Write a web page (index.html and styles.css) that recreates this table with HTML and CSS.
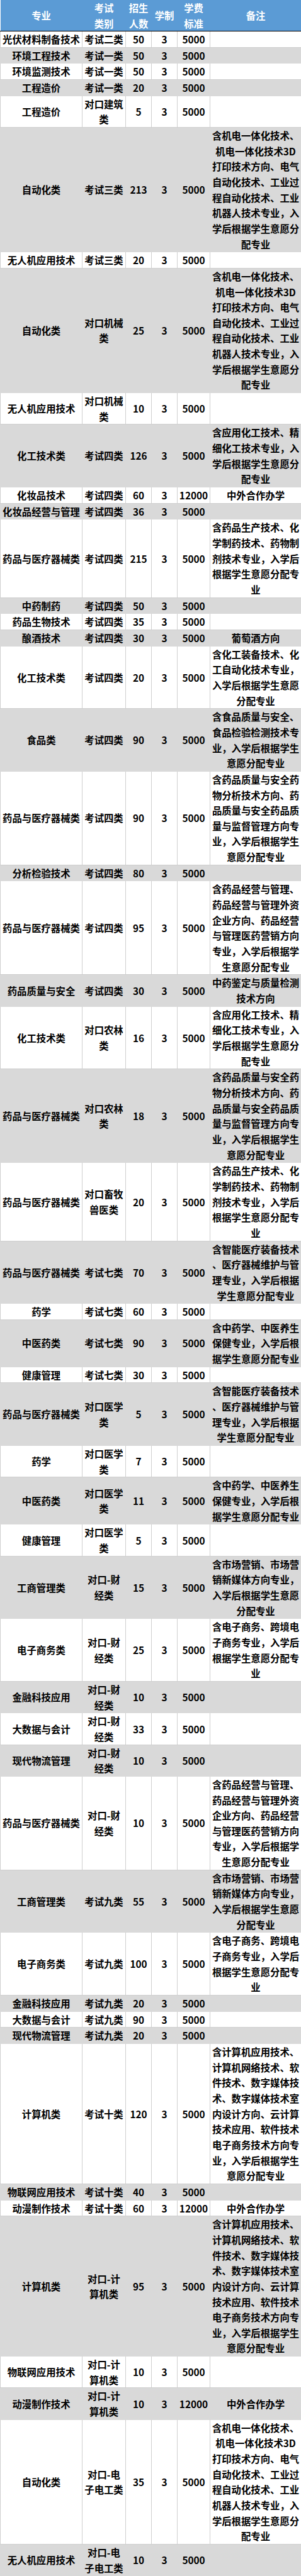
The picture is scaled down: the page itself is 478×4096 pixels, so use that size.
FILE: index.html
```html
<!DOCTYPE html>
<html lang="zh-CN">
<head>
<meta charset="utf-8">
<title>招生计划</title>
<link rel="stylesheet" href="styles.css">
</head>
<body>
<table class="admit">
  <colgroup>
    <col class="c-major"><col class="c-type"><col class="c-num"><col class="c-year"><col class="c-fee"><col class="c-note">
  </colgroup>
  <thead>
    <tr>
      <th>专业</th>
      <th>考试<br>类别</th>
      <th>招生<br>人数</th>
      <th>学制</th>
      <th>学费<br>标准</th>
      <th>备注</th>
    </tr>
  </thead>
  <tbody>
    <tr><td>光伏材料制备技术</td><td>考试二类</td><td>50</td><td>3</td><td>5000</td><td></td></tr>
    <tr><td>环境工程技术</td><td>考试一类</td><td>50</td><td>3</td><td>5000</td><td></td></tr>
    <tr><td>环境监测技术</td><td>考试一类</td><td>50</td><td>3</td><td>5000</td><td></td></tr>
    <tr><td>工程造价</td><td>考试一类</td><td>20</td><td>3</td><td>5000</td><td></td></tr>
    <tr><td>工程造价</td><td>对口建筑<br>类</td><td>5</td><td>3</td><td>5000</td><td></td></tr>
    <tr><td>自动化类</td><td>考试三类</td><td>213</td><td>3</td><td>5000</td><td>含机电一体化技术、<br>机电一体化技术3D<br>打印技术方向、电气<br>自动化技术、工业过<br>程自动化技术、工业<br>机器人技术专业，入<br>学后根据学生意愿分<br>配专业</td></tr>
    <tr><td>无人机应用技术</td><td>考试三类</td><td>20</td><td>3</td><td>5000</td><td></td></tr>
    <tr><td>自动化类</td><td>对口机械<br>类</td><td>25</td><td>3</td><td>5000</td><td>含机电一体化技术、<br>机电一体化技术3D<br>打印技术方向、电气<br>自动化技术、工业过<br>程自动化技术、工业<br>机器人技术专业，入<br>学后根据学生意愿分<br>配专业</td></tr>
    <tr><td>无人机应用技术</td><td>对口机械<br>类</td><td>10</td><td>3</td><td>5000</td><td></td></tr>
    <tr><td>化工技术类</td><td>考试四类</td><td>126</td><td>3</td><td>5000</td><td>含应用化工技术、精<br>细化工技术专业，入<br>学后根据学生意愿分<br>配专业</td></tr>
    <tr><td>化妆品技术</td><td>考试四类</td><td>60</td><td>3</td><td>12000</td><td>中外合作办学</td></tr>
    <tr><td>化妆品经营与管理</td><td>考试四类</td><td>36</td><td>3</td><td>5000</td><td></td></tr>
    <tr><td>药品与医疗器械类</td><td>考试四类</td><td>215</td><td>3</td><td>5000</td><td>含药品生产技术、化<br>学制药技术、药物制<br>剂技术专业，入学后<br>根据学生意愿分配专<br>业</td></tr>
    <tr><td>中药制药</td><td>考试四类</td><td>50</td><td>3</td><td>5000</td><td></td></tr>
    <tr><td>药品生物技术</td><td>考试四类</td><td>35</td><td>3</td><td>5000</td><td></td></tr>
    <tr><td>酿酒技术</td><td>考试四类</td><td>30</td><td>3</td><td>5000</td><td>葡萄酒方向</td></tr>
    <tr><td>化工技术类</td><td>考试四类</td><td>20</td><td>3</td><td>5000</td><td>含化工装备技术、化<br>工自动化技术专业，<br>入学后根据学生意愿<br>分配专业</td></tr>
    <tr><td>食品类</td><td>考试四类</td><td>90</td><td>3</td><td>5000</td><td>含食品质量与安全、<br>食品检验检测技术专<br>业，入学后根据学生<br>意愿分配专业</td></tr>
    <tr><td>药品与医疗器械类</td><td>考试四类</td><td>90</td><td>3</td><td>5000</td><td>含药品质量与安全药<br>物分析技术方向、药<br>品质量与安全药品质<br>量与监督管理方向专<br>业，入学后根据学生<br>意愿分配专业</td></tr>
    <tr><td>分析检验技术</td><td>考试四类</td><td>80</td><td>3</td><td>5000</td><td></td></tr>
    <tr><td>药品与医疗器械类</td><td>考试四类</td><td>95</td><td>3</td><td>5000</td><td>含药品经营与管理、<br>药品经营与管理外资<br>企业方向、药品经营<br>与管理医药营销方向<br>专业，入学后根据学<br>生意愿分配专业</td></tr>
    <tr><td>药品质量与安全</td><td>考试四类</td><td>30</td><td>3</td><td>5000</td><td>中药鉴定与质量检测<br>技术方向</td></tr>
    <tr><td>化工技术类</td><td>对口农林<br>类</td><td>16</td><td>3</td><td>5000</td><td>含应用化工技术、精<br>细化工技术专业，入<br>学后根据学生意愿分<br>配专业</td></tr>
    <tr><td>药品与医疗器械类</td><td>对口农林<br>类</td><td>18</td><td>3</td><td>5000</td><td>含药品质量与安全药<br>物分析技术方向、药<br>品质量与安全药品质<br>量与监督管理方向专<br>业，入学后根据学生<br>意愿分配专业</td></tr>
    <tr><td>药品与医疗器械类</td><td>对口畜牧<br>兽医类</td><td>20</td><td>3</td><td>5000</td><td>含药品生产技术、化<br>学制药技术、药物制<br>剂技术专业，入学后<br>根据学生意愿分配专<br>业</td></tr>
    <tr><td>药品与医疗器械类</td><td>考试七类</td><td>70</td><td>3</td><td>5000</td><td>含智能医疗装备技术<br>、医疗器械维护与管<br>理专业，入学后根据<br>学生意愿分配专业</td></tr>
    <tr><td>药学</td><td>考试七类</td><td>60</td><td>3</td><td>5000</td><td></td></tr>
    <tr><td>中医药类</td><td>考试七类</td><td>90</td><td>3</td><td>5000</td><td>含中药学、中医养生<br>保健专业，入学后根<br>据学生意愿分配专业</td></tr>
    <tr><td>健康管理</td><td>考试七类</td><td>30</td><td>3</td><td>5000</td><td></td></tr>
    <tr><td>药品与医疗器械类</td><td>对口医学<br>类</td><td>5</td><td>3</td><td>5000</td><td>含智能医疗装备技术<br>、医疗器械维护与管<br>理专业，入学后根据<br>学生意愿分配专业</td></tr>
    <tr><td>药学</td><td>对口医学<br>类</td><td>7</td><td>3</td><td>5000</td><td></td></tr>
    <tr><td>中医药类</td><td>对口医学<br>类</td><td>11</td><td>3</td><td>5000</td><td>含中药学、中医养生<br>保健专业，入学后根<br>据学生意愿分配专业</td></tr>
    <tr><td>健康管理</td><td>对口医学<br>类</td><td>5</td><td>3</td><td>5000</td><td></td></tr>
    <tr><td>工商管理类</td><td>对口-财<br>经类</td><td>15</td><td>3</td><td>5000</td><td>含市场营销、市场营<br>销新媒体方向专业，<br>入学后根据学生意愿<br>分配专业</td></tr>
    <tr><td>电子商务类</td><td>对口-财<br>经类</td><td>25</td><td>3</td><td>5000</td><td>含电子商务、跨境电<br>子商务专业，入学后<br>根据学生意愿分配专<br>业</td></tr>
    <tr><td>金融科技应用</td><td>对口-财<br>经类</td><td>10</td><td>3</td><td>5000</td><td></td></tr>
    <tr><td>大数据与会计</td><td>对口-财<br>经类</td><td>33</td><td>3</td><td>5000</td><td></td></tr>
    <tr><td>现代物流管理</td><td>对口-财<br>经类</td><td>10</td><td>3</td><td>5000</td><td></td></tr>
    <tr><td>药品与医疗器械类</td><td>对口-财<br>经类</td><td>10</td><td>3</td><td>5000</td><td>含药品经营与管理、<br>药品经营与管理外资<br>企业方向、药品经营<br>与管理医药营销方向<br>专业，入学后根据学<br>生意愿分配专业</td></tr>
    <tr><td>工商管理类</td><td>考试九类</td><td>55</td><td>3</td><td>5000</td><td>含市场营销、市场营<br>销新媒体方向专业，<br>入学后根据学生意愿<br>分配专业</td></tr>
    <tr><td>电子商务类</td><td>考试九类</td><td>100</td><td>3</td><td>5000</td><td>含电子商务、跨境电<br>子商务专业，入学后<br>根据学生意愿分配专<br>业</td></tr>
    <tr><td>金融科技应用</td><td>考试九类</td><td>20</td><td>3</td><td>5000</td><td></td></tr>
    <tr><td>大数据与会计</td><td>考试九类</td><td>90</td><td>3</td><td>5000</td><td></td></tr>
    <tr><td>现代物流管理</td><td>考试九类</td><td>20</td><td>3</td><td>5000</td><td></td></tr>
    <tr><td>计算机类</td><td>考试十类</td><td>120</td><td>3</td><td>5000</td><td>含计算机应用技术、<br>计算机网络技术、软<br>件技术、数字媒体技<br>术、数字媒体技术室<br>内设计方向、云计算<br>技术应用、软件技术<br>电子商务技术方向专<br>业，入学后根据学生<br>意愿分配专业</td></tr>
    <tr><td>物联网应用技术</td><td>考试十类</td><td>40</td><td>3</td><td>5000</td><td></td></tr>
    <tr><td>动漫制作技术</td><td>考试十类</td><td>60</td><td>3</td><td>12000</td><td>中外合作办学</td></tr>
    <tr><td>计算机类</td><td>对口-计<br>算机类</td><td>95</td><td>3</td><td>5000</td><td>含计算机应用技术、<br>计算机网络技术、软<br>件技术、数字媒体技<br>术、数字媒体技术室<br>内设计方向、云计算<br>技术应用、软件技术<br>电子商务技术方向专<br>业，入学后根据学生<br>意愿分配专业</td></tr>
    <tr><td>物联网应用技术</td><td>对口-计<br>算机类</td><td>10</td><td>3</td><td>5000</td><td></td></tr>
    <tr><td>动漫制作技术</td><td>对口-计<br>算机类</td><td>10</td><td>3</td><td>12000</td><td>中外合作办学</td></tr>
    <tr><td>自动化类</td><td>对口-电<br>子电工类</td><td>35</td><td>3</td><td>5000</td><td>含机电一体化技术、<br>机电一体化技术3D<br>打印技术方向、电气<br>自动化技术、工业过<br>程自动化技术、工业<br>机器人技术专业，入<br>学后根据学生意愿分<br>配专业</td></tr>
    <tr><td>无人机应用技术</td><td>对口-电<br>子电工类</td><td>10</td><td>3</td><td>5000</td><td></td></tr>
  </tbody>
</table>
</body>
</html>
```

FILE: styles.css
```css
html, body {
  margin: 0;
  padding: 0;
  background: #ffffff;
}

body {
  font-family: "Noto Sans CJK SC", "Noto Sans", sans-serif;
  color: #000000;
}

.admit {
  width: 478px;
  border-collapse: collapse;
  table-layout: fixed;
  font-size: 15.36px;
  font-weight: 700;
}

.c-major { width: 130px; }
.c-type { width: 69px; }
.c-num { width: 41px; }
.c-year { width: 41px; }
.c-fee { width: 52px; }
.c-note { width: 145px; }

.admit th {
  background: #5b9bd5;
  color: #ffffff;
  height: 49px;
  padding: 0;
  line-height: 24.5px;
  text-align: center;
  vertical-align: middle;
  font-weight: 700;
  border: none;
  border-bottom: 1px solid #000000;
}

.admit td {
  padding: 0;
  line-height: 24.65px;
  text-align: center;
  vertical-align: middle;
  white-space: nowrap;
  background: #ffffff;
  border: 1px solid #cfcfcf;
  color: #000000;
}

.admit tbody tr:nth-child(even) td {
  background: #d9d9d9;
  border-color: #d9d9d9;
}
```
